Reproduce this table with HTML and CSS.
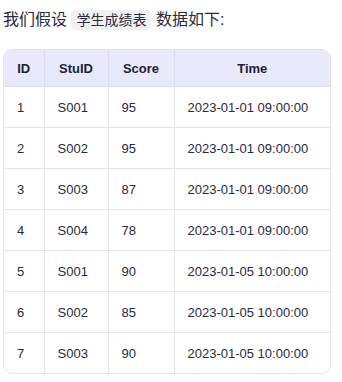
FILE: index.html
```html
<!DOCTYPE html>
<html>
<head>
<meta charset="utf-8">
<link rel="stylesheet" href="styles.css">
</head>
<body>
<div class="wrap">
  <p class="intro">我们假设 <code class="code">学生成绩表</code> 数据如下:</p>
  <div class="table-box">
    <table class="grid">
      <colgroup>
        <col class="c-id"><col class="c-stu"><col class="c-score"><col class="c-time">
      </colgroup>
      <thead>
        <tr><th>ID</th><th>StuID</th><th>Score</th><th>Time</th></tr>
      </thead>
      <tbody>
        <tr><td>1</td><td>S001</td><td>95</td><td>2023-01-01 09:00:00</td></tr>
        <tr><td>2</td><td>S002</td><td>95</td><td>2023-01-01 09:00:00</td></tr>
        <tr><td>3</td><td>S003</td><td>87</td><td>2023-01-01 09:00:00</td></tr>
        <tr><td>4</td><td>S004</td><td>78</td><td>2023-01-01 09:00:00</td></tr>
        <tr><td>5</td><td>S001</td><td>90</td><td>2023-01-05 10:00:00</td></tr>
        <tr><td>6</td><td>S002</td><td>85</td><td>2023-01-05 10:00:00</td></tr>
        <tr><td>7</td><td>S003</td><td>90</td><td>2023-01-05 10:00:00</td></tr>
      </tbody>
    </table>
  </div>
</div>
</body>
</html>
```
FILE: styles.css
```css
html, body { margin: 0; padding: 0; background: #fff; }
body {
  font-family: "Liberation Sans", Arial, "Noto Sans CJK SC", sans-serif;
  color: #2a2a3c;
}
.wrap { padding: 0 11px 0 3px; }
.intro {
  margin: 0;
  padding-top: 9px;
  font-size: 16px;
  line-height: 22px;
  font-family: "Liberation Sans", "Noto Sans CJK SC", sans-serif;
}
.code {
  font-family: "Liberation Sans", "Noto Sans CJK SC", sans-serif;
  font-size: 14px;
  background: #f1f1f4;
  border-radius: 5px;
  padding: 2px 5px;
}
.table-box {
  margin-top: 18px;
  border: 1px solid #e3e3ea;
  border-radius: 9px;
  overflow: hidden;
  width: 326px;
}
.grid {
  width: 100%;
  border-collapse: collapse;
  table-layout: fixed;
  font-size: 13px;
}
.c-id { width: 40px; }
.c-stu { width: 64px; }
.c-score { width: 66px; }
.grid th {
  background: #e9e9fc;
  font-weight: bold;
  color: #1e1e36;
  height: 36px;
  padding: 0;
  text-align: center;
  border-left: 1px solid #dcdcf0;
  border-bottom: 1px solid #dcdcf0;
}
.grid td {
  height: 40px;
  padding: 0 0 0 13px;
  text-align: left;
  border-left: 1px solid #e3e3ea;
  border-top: 1px solid #e3e3ea;
}
.grid th:first-child, .grid td:first-child { border-left: none; }
.grid tbody tr:first-child td { border-top: none; }
```
